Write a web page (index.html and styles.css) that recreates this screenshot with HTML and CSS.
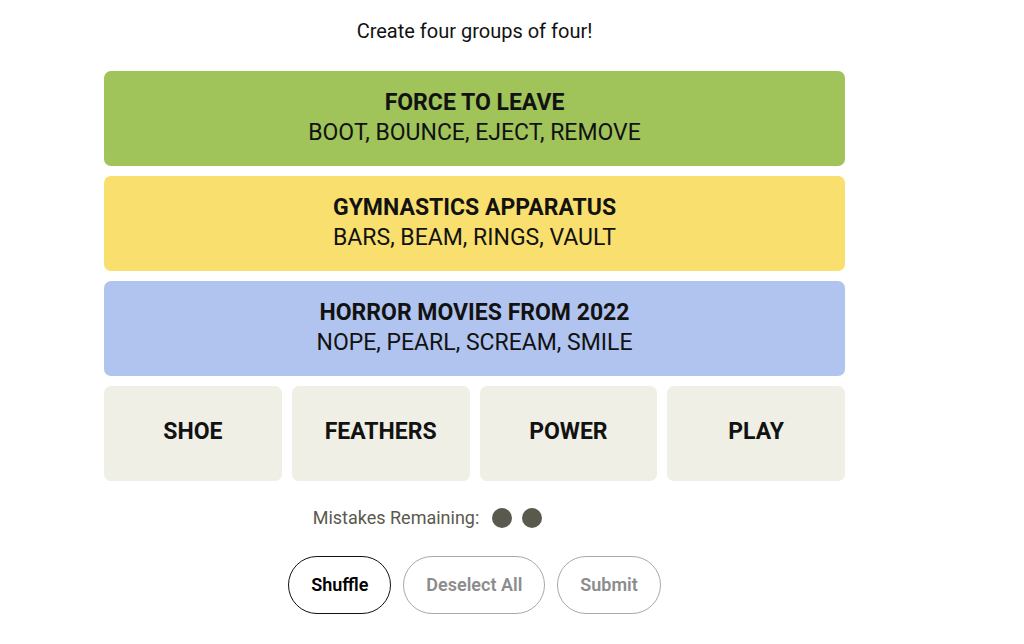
FILE: index.html
```html
<!DOCTYPE html>
<html lang="en">
<head>
	<meta charset="UTF-8">
	<meta name="viewport" content="width=device-width, initial-scale=1.0">
	<title>Connections</title>
	<link rel="stylesheet" href="styles.css">
</head>
<body>
	<main class="game">
		<h1 class="instructions">Create four groups of four!</h1>

		<div class="board">
			<section class="solved green">
				<h2>FORCE TO LEAVE</h2>
				<p>BOOT, BOUNCE, EJECT, REMOVE</p>
			</section>
			<section class="solved yellow">
				<h2>GYMNASTICS APPARATUS</h2>
				<p>BARS, BEAM, RINGS, VAULT</p>
			</section>
			<section class="solved blue">
				<h2>HORROR MOVIES FROM 2022</h2>
				<p>NOPE, PEARL, SCREAM, SMILE</p>
			</section>
			<div class="tiles">
				<button type="button" class="tile">SHOE</button>
				<button type="button" class="tile">FEATHERS</button>
				<button type="button" class="tile">POWER</button>
				<button type="button" class="tile">PLAY</button>
			</div>
		</div>

		<div class="mistakes">
			<span>Mistakes Remaining:</span>
			<div class="bubbles">
				<span class="bubble"></span>
				<span class="bubble"></span>
			</div>
		</div>

		<div class="actions">
			<button type="button" class="action-btn">Shuffle</button>
			<button type="button" class="action-btn" disabled>Deselect All</button>
			<button type="button" class="action-btn" disabled>Submit</button>
		</div>
	</main>
</body>
</html>
```
FILE: styles.css
```css
* {
	box-sizing: border-box;
}

body {
	margin: 0;
	padding: 16px 179px 16px 104px;
	background: #fff;
	color: #121212;
	font-family: Roboto, "Liberation Sans", Arial, sans-serif;
}

h1,
h2,
p {
	margin: 0;
}

.instructions {
	margin-bottom: 25px;
	font-size: 20px;
	font-weight: 400;
	line-height: 30px;
	text-align: center;
}

.board {
	display: grid;
	gap: 10px;
}

.solved {
	display: flex;
	flex-direction: column;
	justify-content: center;
	min-height: 95px;
	padding-bottom: 2px;
	border-radius: 7px;
	font-size: 23px;
	line-height: 30px;
	text-align: center;
}

.solved h2 {
	font-size: 23px;
	font-weight: 700;
}

.green {
	background: #a0c35a;
}

.yellow {
	background: #f9df6d;
}

.blue {
	background: #b0c4ef;
}

.tiles {
	display: grid;
	grid-template-columns: repeat(4, 1fr);
	gap: 10px;
}

button {
	padding: 0;
	border: 0;
	font-family: inherit;
	cursor: pointer;
}

.tile {
	min-height: 95px;
	padding-bottom: 4px;
	border-radius: 7px;
	background: #efefe6;
	color: #121212;
	font-size: 23px;
	font-weight: 700;
}

.mistakes {
	display: flex;
	justify-content: center;
	align-items: center;
	gap: 13px;
	margin-top: 22px;
	color: #5a594e;
	font-size: 18px;
	line-height: 30px;
}

/* keeps room for all four bubbles so the label stays put */
.bubbles {
	display: flex;
	gap: 10px;
	width: 144px;
}

.bubble {
	width: 20px;
	height: 20px;
	border-radius: 50%;
	background: #5a594e;
}

.actions {
	display: flex;
	justify-content: center;
	gap: 12px;
	margin-top: 23px;
}

.action-btn {
	height: 58px;
	padding: 0 22px 2px;
	border: 1px solid #121212;
	border-radius: 29px;
	background: #fff;
	color: #000;
	font-size: 18px;
	font-weight: 600;
}

.action-btn:disabled {
	border-color: #a9a9a9;
	color: #8c8c8c;
	cursor: default;
}
```
